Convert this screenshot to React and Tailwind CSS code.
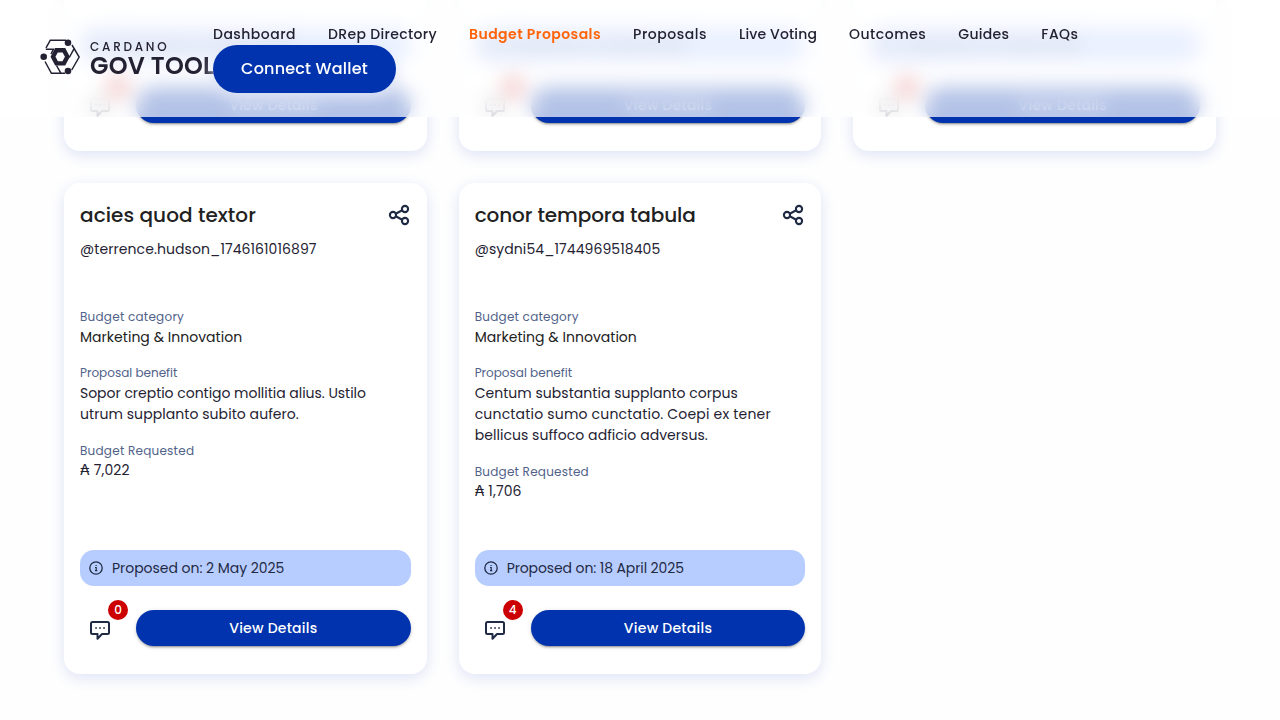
const proposals = [
  { id: 1, date: "18 April 2025", comments: 0 },
  { id: 2, date: "18 April 2025", comments: 0 },
  { id: 3, date: "18 April 2025", comments: 0 },
  {
    id: 4,
    title: "acies quod textor",
    titleTracking: "tracking-[0.07px]",
    user: "@terrence.hudson_1746161016897",
    category: "Marketing & Innovation",
    benefit: [
      ["Sopor creptio contigo mollitia alius. Ustilo", "tracking-[-0.03px]"],
      ["utrum supplanto subito aufero.", "tracking-[0.06px]"],
    ],
    cost: "7,022",
    date: "2 May 2025",
    dateTracking: "tracking-[-0.04px]",
    comments: 0,
  },
  {
    id: 5,
    title: "conor tempora tabula",
    titleTracking: "tracking-[-0.1px]",
    user: "@sydni54_1744969518405",
    category: "Marketing & Innovation",
    benefit: [
      ["Centum substantia supplanto corpus", "tracking-[0.03px]"],
      ["cunctatio sumo cunctatio. Coepi ex tener", "tracking-[0.19px]"],
      ["bellicus suffoco adficio adversus.", "tracking-[0.05px]"],
    ],
    cost: "1,706",
    date: "18 April 2025",
    dateTracking: "tracking-[-0.11px]",
    comments: 4,
  },
];

const links = [
  ["Dashboard", "tracking-[0.47px]"],
  ["DRep Directory", "tracking-[0.34px]"],
  ["Budget Proposals", "tracking-[0.45px]"],
  ["Proposals", "tracking-[0.53px]"],
  ["Live Voting", "tracking-[0.15px]"],
  ["Outcomes", "tracking-[0.5px]"],
  ["Guides", "tracking-[0.3px]"],
  ["FAQs", "tracking-[0.4px]"],
];

function ShareIcon() {
  return (
    <svg className="size-6 shrink-0" viewBox="0 0 24 24" fill="none" stroke="#1f2a44" strokeWidth="2.1">
      <circle cx="18" cy="6" r="3.1" />
      <circle cx="6" cy="12" r="3.1" />
      <circle cx="18" cy="18" r="3.1" />
      <path d="M8.7 10.7 15.3 7.3M8.7 13.3l6.6 3.4" />
    </svg>
  );
}

function CommentIcon() {
  return (
    <svg className="size-6" viewBox="0 0 24 24" fill="none" stroke="#1f2a44" strokeWidth="2" strokeLinejoin="round">
      <path d="M4.5 4h15A1.5 1.5 0 0 1 21 5.5v9a1.5 1.5 0 0 1-1.5 1.5H14l-4.500 4.800V16h-5A1.5 1.5 0 0 1 3 14.500v-9A1.5 1.5 0 0 1 4.500 4Z" />
      <path d="M7.200 10h1.700M11.200 10h1.700M15.200 10h1.700" strokeWidth="1.7" />
    </svg>
  );
}

function InfoIcon() {
  return (
    <svg className="size-4 shrink-0" viewBox="0 0 16 16" fill="none" stroke="#1f2a44" strokeWidth="1.3">
      <circle cx="8" cy="8" r="6.2" />
      <path d="M7 7.500h1.200V10.700M7 10.700h2.300M7.500 5.500h1.200" strokeWidth="1.2" />
    </svg>
  );
}

function Logo() {
  return (
    <div className="flex w-[173px] shrink-0 items-center gap-[10px] text-[#242232]">
      <svg className="mb-1 h-9 w-10 shrink-0" viewBox="0 0 40 36" fill="none" stroke="currentColor" strokeWidth="1.5">
        <path d="M26 1.200H10.300L6 8.800M32 6l7.200 12-7.500 13M25 34.300H11.400L5 22.500M5.800 10.200H13.500L11 15M34.500 8.800l-5.200 9.700M16.500 26.500l4.200 7.300" />
        <circle cx="28" cy="3.800" r="3.300" fill="currentColor" stroke="none" />
        <circle cx="3.700" cy="17.800" r="3.300" fill="currentColor" stroke="none" />
        <circle cx="28" cy="32" r="3.300" fill="currentColor" stroke="none" />
        <path d="M16.500 11.200h7.400l3.500 6.600-3.500 6.600h-7.400l-3.500-6.600Z" strokeWidth="4.400" />
      </svg>
      <div className="flex flex-col whitespace-nowrap">
        <span className="text-xs leading-[15px] font-medium tracking-[2.75px]">CARDANO</span>
        <span className="text-2xl leading-[24px] font-semibold tracking-[0.2px]">GOV TOOL</span>
      </div>
    </div>
  );
}

function Header() {
  return (
    <header className="absolute inset-x-0 top-0 flex h-[117px] items-center bg-white/70 px-10 backdrop-blur-[10px]">
      <Logo />
      <div className="min-w-0 flex-1 pb-px">
        <nav className="flex h-[22px] items-center gap-8">
          {links.map(([label, tracking]) => (
            <a
              key={label}
              className={`text-sm whitespace-nowrap ${tracking} ${
                label === "Budget Proposals" ? "font-semibold text-[#ff640a]" : "font-medium text-[#242232]"
              }`}
            >
              {label}
            </a>
          ))}
        </nav>
        <button className="flex h-12 w-[183px] items-center justify-center rounded-full bg-[#0033ad] text-base font-medium tracking-[0.2px] text-white shadow-[0_4px_15px_0_#dde3f5]">
          Connect Wallet
        </button>
      </div>
    </header>
  );
}

function Details({ p }) {
  return (
    <>
      <div className="flex items-center justify-between">
        <h2 className={`text-xl leading-6 font-medium text-[#212121] ${p.titleTracking}`}>{p.title}</h2>
        <ShareIcon />
      </div>
      <p className="mt-3 text-sm leading-5 tracking-[0.08px] text-[#242232]">{p.user}</p>
      <div className="mt-[48px] flex flex-col gap-[15px] text-sm leading-[21px] text-[#242232]">
        <div>
          <p className="text-xs leading-5 tracking-[0.24px] text-[#506288]">Budget category</p>
          <p className="tracking-[0.03px] text-[#212121]">{p.category}</p>
        </div>
        <div>
          <p className="text-xs leading-5 text-[#506288]">Proposal benefit</p>
          {p.benefit.map(([line, tracking]) => (
            <p key={line} className={`whitespace-nowrap ${tracking}`}>
              {line}
            </p>
          ))}
        </div>
        <div>
          <p className="pt-0.5 text-xs leading-[18px] tracking-[0.24px] text-[#506288]">Budget Requested</p>
          <p className="tracking-[0.14px]">₳ {p.cost}</p>
        </div>
      </div>
    </>
  );
}

function Card({ p }) {
  return (
    <article className="flex h-[491px] flex-col rounded-2xl bg-white px-4 pt-5 pb-7 shadow-[0_4px_15px_0_#dde3f5]">
      {p.title && <Details p={p} />}
      <div className="mt-auto flex h-9 items-center gap-2 rounded-[14px] bg-[#b8cdff] px-2 text-sm text-[#1f2a44]">
        <InfoIcon />
        <span className={p.dateTracking}>Proposed on: {p.date}</span>
      </div>
      <div className="mt-6 flex h-9 gap-4">
        <div className="relative flex size-10 items-center justify-center">
          <CommentIcon />
          <span className="absolute -top-[10px] -right-2 flex size-5 items-center justify-center rounded-full bg-[#cc0000] text-xs font-medium text-white">
            {p.comments}
          </span>
        </div>
        <button className="h-9 flex-1 rounded-full bg-[#0033ad] text-sm font-medium tracking-[0.24px] text-white shadow-[0_3px_1px_-2px_rgba(0,0,0,0.2),0_2px_2px_0_rgba(0,0,0,0.14),0_1px_5px_0_rgba(0,0,0,0.12)]">
          View Details
        </button>
      </div>
    </article>
  );
}

export default function App() {
  return (
    <div className="relative flex h-screen flex-col justify-end overflow-hidden bg-[#fefefe] font-['Poppins','Inter',sans-serif]">
      <main className="grid shrink-0 grid-cols-3 gap-8 px-16 pb-[46px]">
        {proposals.map((p) => (
          <Card key={p.id} p={p} />
        ))}
      </main>
      <Header />
    </div>
  );
}
